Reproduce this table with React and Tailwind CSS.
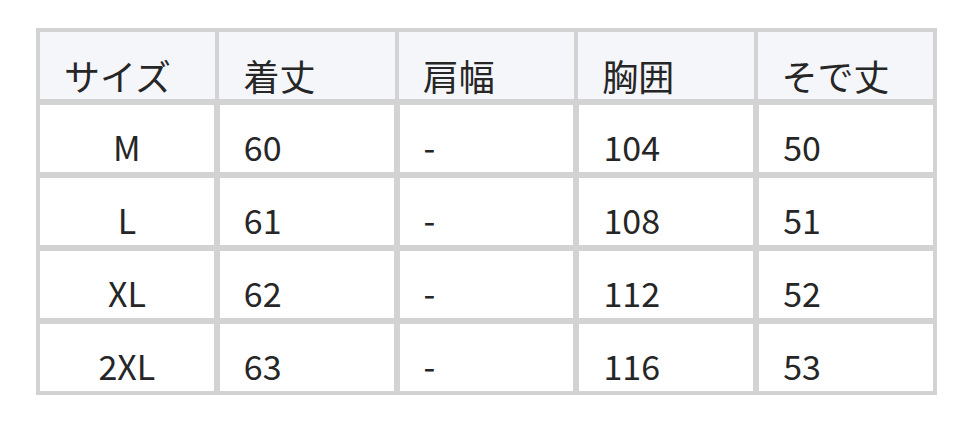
import React from "react";

const header = ["サイズ", "着丈", "肩幅", "胸囲", "そで丈"];
const rows = [
  ["M", "60", "-", "104", "50"],
  ["L", "61", "-", "108", "51"],
  ["XL", "62", "-", "112", "52"],
  ["2XL", "63", "-", "116", "53"],
];

export default function App() {
  return (
    <div
      className="w-[972px] h-[422px] bg-white pt-[28px] pl-[36px]"
      style={{ fontFamily: '"Noto Sans CJK JP", "Noto Sans", sans-serif' }}
    >
      <div className="w-[901px] bg-[#d3d3d3] p-[4px] flex flex-col gap-[6px] text-[#262626]">
        <div className="grid grid-cols-5 gap-x-[4px]">
          {header.map((h) => (
            <div
              key={h}
              className="h-[67px] bg-[#f5f6fa] flex items-center pt-[18px] pl-[24px] text-[36px] leading-none"
            >
              {h}
            </div>
          ))}
        </div>
        {rows.map((r) => (
          <div key={r[0]} className="grid grid-cols-5 gap-x-[6px]">
            {r.map((c, i) => (
              <div
                key={i}
                className={
                  "h-[67px] bg-white flex items-center pt-[17px] text-[34px] leading-none " +
                  (i === 0 ? "justify-center" : "pl-[24px]")
                }
              >
                {c}
              </div>
            ))}
          </div>
        ))}
      </div>
    </div>
  );
}
